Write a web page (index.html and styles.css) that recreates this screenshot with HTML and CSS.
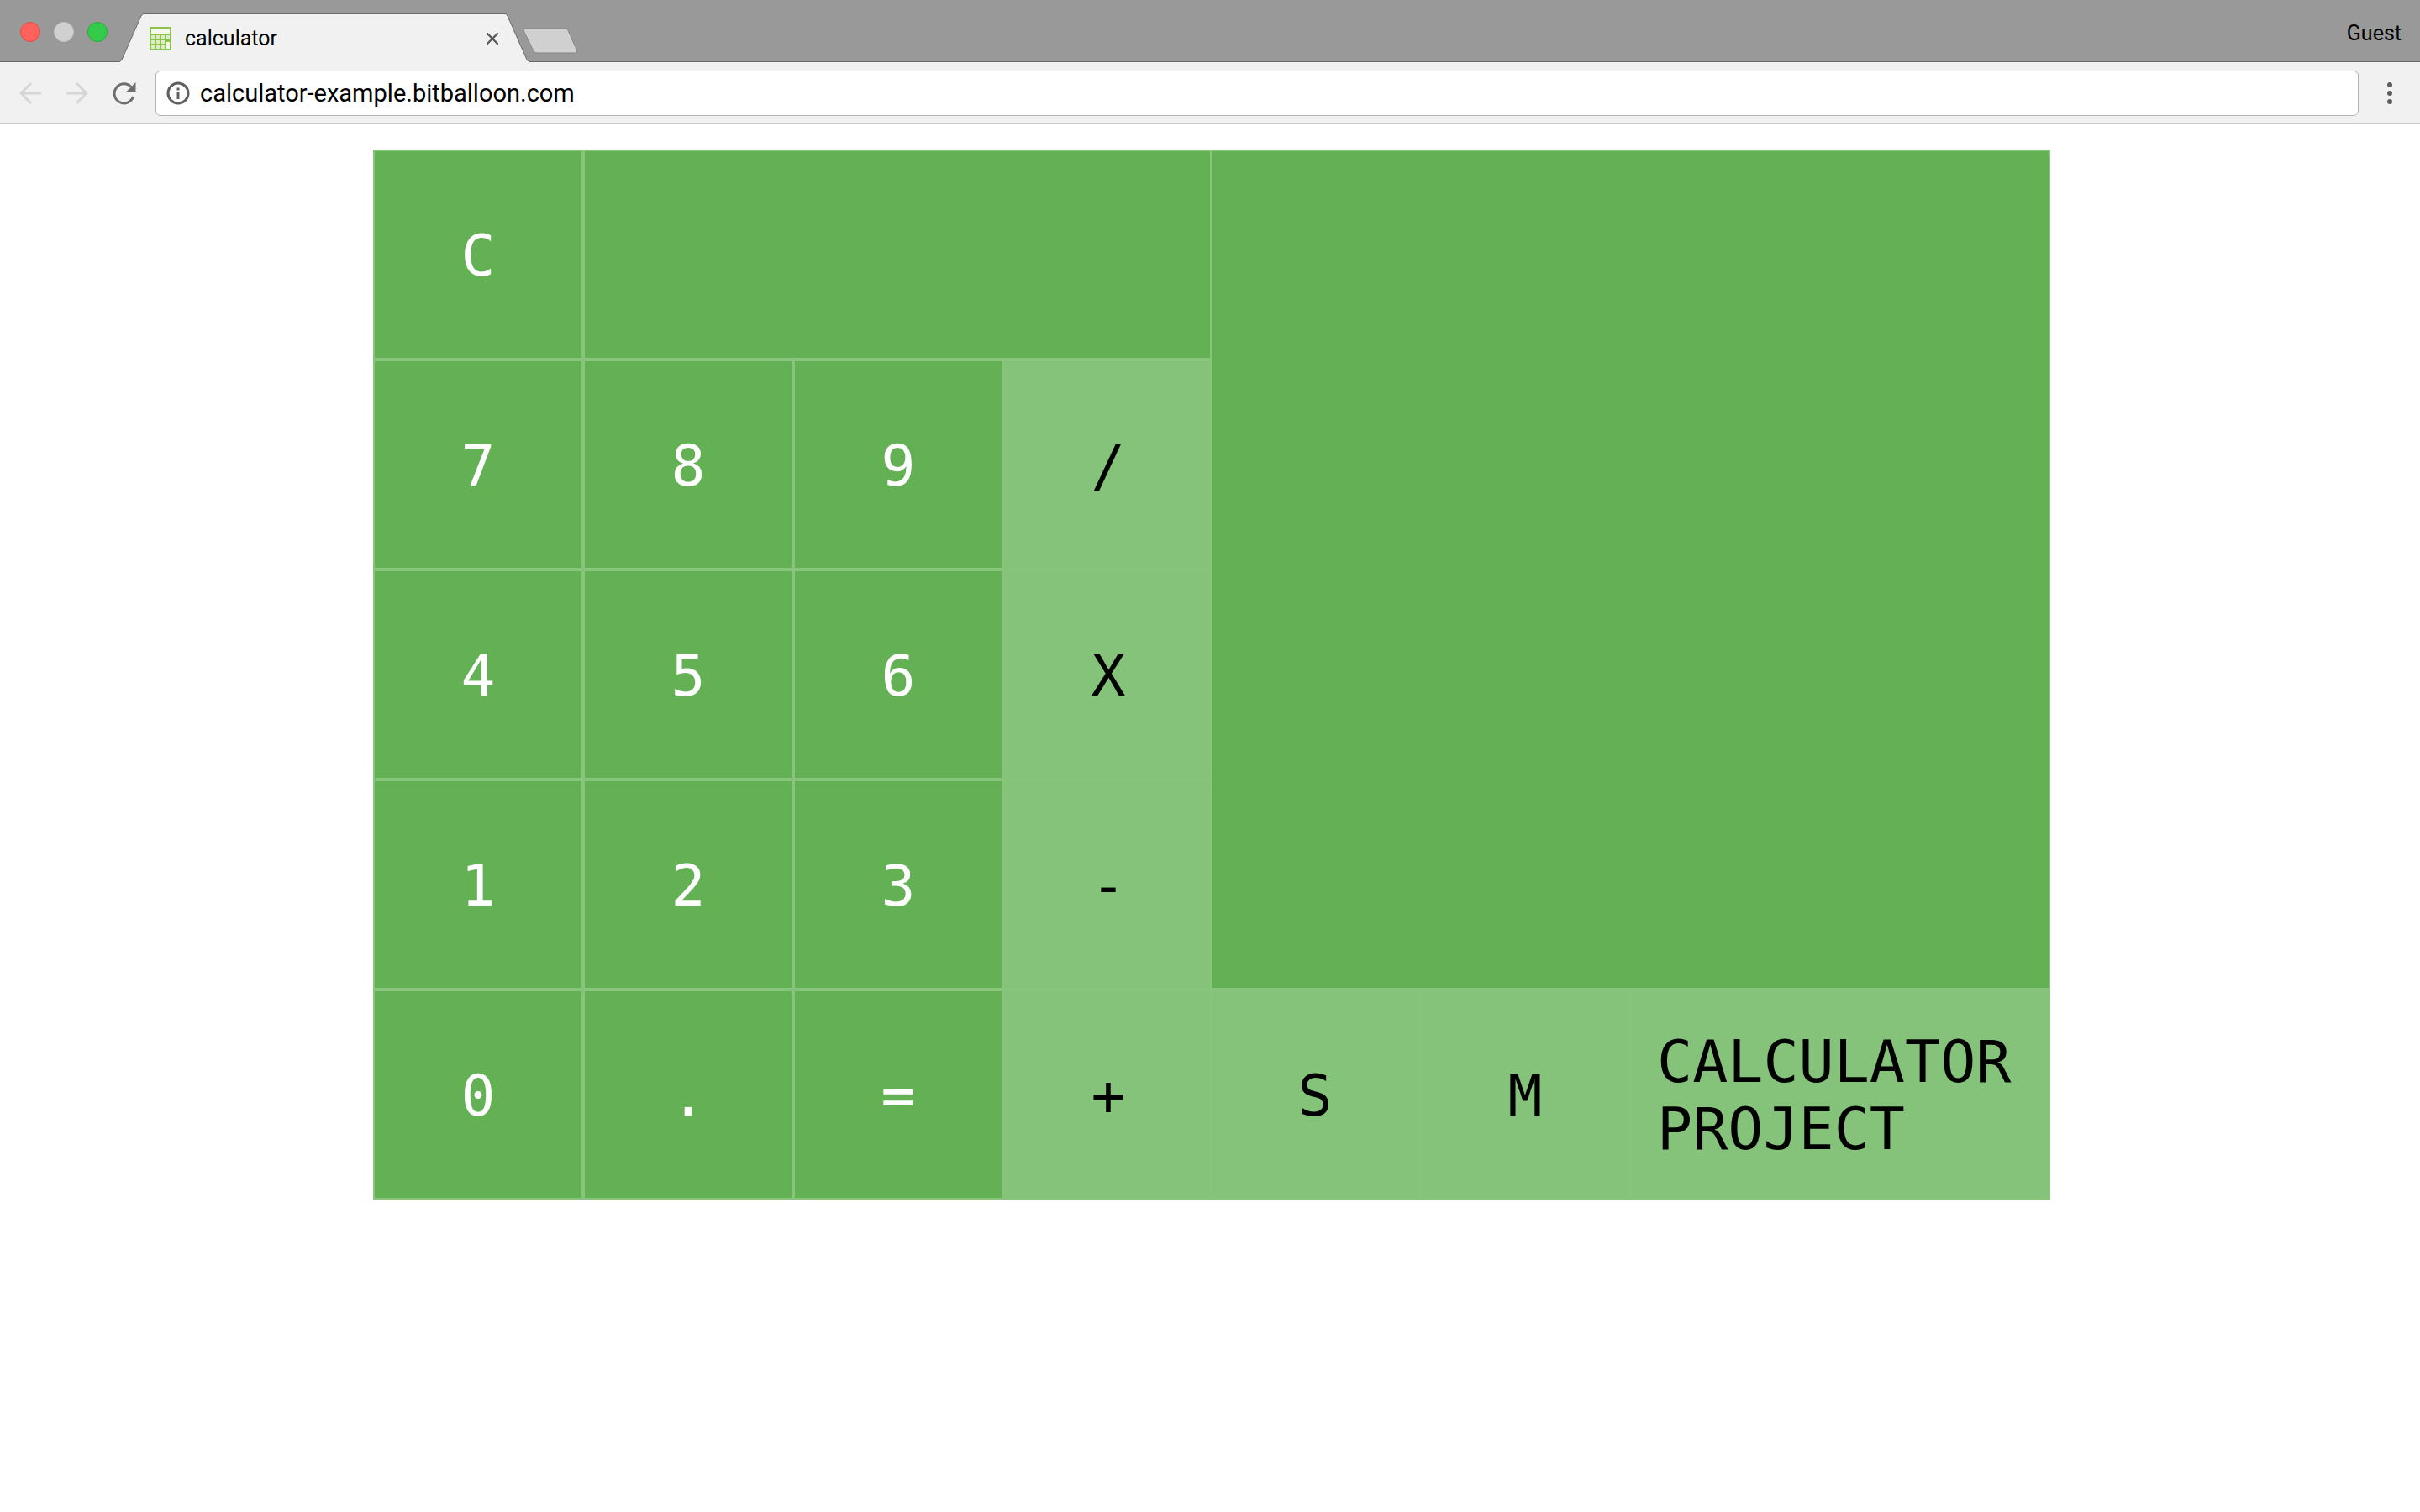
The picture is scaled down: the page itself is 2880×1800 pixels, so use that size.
FILE: index.html
```html
<!DOCTYPE html>
<html lang="en">
<head>
<meta charset="utf-8">
<title>calculator</title>
<link rel="stylesheet" href="styles.css">
</head>
<body>
<header class="browser">
  <div class="tab-strip">
    <div class="window-controls">
      <button class="light light-close" aria-label="Close window"></button>
      <button class="light light-min" aria-label="Minimize window"></button>
      <button class="light light-zoom" aria-label="Zoom window"></button>
    </div>
    <div class="tab">
      <svg class="tab-edge" width="28" height="58" viewBox="0 0 28 58" aria-hidden="true"><path d="M0 58V56.500Q1.500 56.500 2 55L25 3Q26 .5 28 .5V58Z" fill="#f1f1f1"/><path d="M0 56.500Q1.500 56.500 2 55L25 3Q26 .5 28 .5" fill="none" stroke="#6a6a6a"/></svg>
      <div class="tab-body">
        <svg class="favicon" width="26" height="28" viewBox="0 0 26 28" aria-hidden="true"><path fill="#8bc34a" d="M0 0h26v28H0z"/><path fill="#f4f8ee" d="M2 2h22v6H2zM20 18h4v8h-4z"/><path fill="#dcebc8" d="M2 10h4v4H2zm6 0h4v4H8zm6 0h4v4h-4zm6 0h4v4h-4zM2 16h4v4H2zm6 0h4v4H8zm6 0h4v4h-4zM2 22h4v4H2zm6 0h4v4H8zm6 0h4v4h-4z"/></svg>
        <span class="tab-title">calculator</span>
        <button class="icon-button" aria-label="Close tab"><svg width="14" height="14" viewBox="0 0 14 14"><path d="M1 1l12 12M13 1L1 13" stroke="#5a5a5a" stroke-width="2.400" stroke-linecap="round"/></svg></button>
      </div>
      <svg class="tab-edge" width="28" height="58" viewBox="0 0 28 58" aria-hidden="true"><path d="M28 58V56.500Q26.500 56.500 26 55L3 3Q2 .5 0 .5V58Z" fill="#f1f1f1"/><path d="M28 56.500Q26.500 56.500 26 55L3 3Q2 .5 0 .5" fill="none" stroke="#6a6a6a"/></svg>
    </div>
    <button class="icon-button new-tab" aria-label="New tab"><svg width="66" height="32" viewBox="0 0 66 32"><path d="M4 1H50Q53 1 54 3L64.500 27Q65.500 30 62.500 30H17Q14 30 12.500 27L1.500 4Q.5 1 4 1Z" fill="#d0d0d0" stroke="#858585"/></svg></button>
    <button class="guest">Guest</button>
  </div>
  <div class="toolbar">
    <button class="icon-button" aria-label="Back"><svg width="28" height="28" viewBox="0 0 28 28"><path d="M27 14H3M15 2L3 14L15 26" fill="none" stroke="#d6d6d6" stroke-width="3"/></svg></button>
    <button class="icon-button" aria-label="Forward"><svg width="28" height="28" viewBox="0 0 28 28"><path d="M1 14H25M13 2L25 14L13 26" fill="none" stroke="#d6d6d6" stroke-width="3"/></svg></button>
    <button class="icon-button" aria-label="Reload"><svg width="28" height="28" viewBox="0 0 28 28"><path d="M22 6.500A11.500 11.500 0 1 0 24.500 18" fill="none" stroke="#6e6e6e" stroke-width="3"/><path d="M27.500 1V12H16.500Z" fill="#6e6e6e"/></svg></button>
    <label class="omnibox">
      <svg width="28" height="28" viewBox="0 0 28 28" aria-hidden="true"><circle cx="14" cy="14" r="12" fill="none" stroke="#5f5f5f" stroke-width="3"/><path d="M12.500 7.500h3v3h-3zM12.500 12.500h3v8.500h-3z" fill="#5f5f5f"/></svg>
      <input class="address" type="text" aria-label="Address" value="calculator-example.bitballoon.com">
    </label>
    <button class="icon-button" aria-label="Menu"><svg width="28" height="28" viewBox="0 0 28 28" fill="#5f5f5f"><circle cx="14" cy="4" r="3"/><circle cx="14" cy="14" r="3"/><circle cx="14" cy="24" r="3"/></svg></button>
  </div>
</header>
<main class="calculator">
  <section class="keypad" aria-label="Keypad">
    <button class="key">C</button>
    <output class="display"></output>
    <button class="key">7</button><button class="key">8</button><button class="key">9</button><button class="key light-key">/</button>
    <button class="key">4</button><button class="key">5</button><button class="key">6</button><button class="key light-key">X</button>
    <button class="key">1</button><button class="key">2</button><button class="key">3</button><button class="key light-key">-</button>
    <button class="key">0</button><button class="key">.</button><button class="key">=</button><button class="key light-key">+</button>
  </section>
  <section class="side" aria-label="History">
    <output class="history"></output>
    <button class="key light-key">S</button>
    <button class="key light-key">M</button>
    <h1 class="title">CALCULATOR PROJECT</h1>
  </section>
</main>
</body>
</html>
```
FILE: styles.css
```css
* {
  box-sizing: border-box;
}

body {
  margin: 0;
  background: #fff;
  font-family: Roboto, "Liberation Sans", sans-serif;
  color: #000;
}

button {
  padding: 0;
  border: 0;
  background: none;
  color: inherit;
  font: inherit;
}

svg {
  display: block;
}

/* Browser window */
.browser {
  background: #f1f1f1;
  border-bottom: 1px solid #ccc;
}

.tab-strip {
  display: flex;
  align-items: flex-end;
  height: 74px;
  padding: 0 22px 0 24px;
  background: linear-gradient(#999, #999 73px, #6a6a6a 73px);
}

.window-controls {
  display: flex;
  gap: 16px;
  padding-bottom: 24px;
}

.light {
  width: 24px;
  height: 24px;
  border: 1px solid;
  border-radius: 50%;
}

.light-close {
  background: #ff625c;
  border-color: #e24b46;
}

.light-min {
  background: #d0d0d0;
  border-color: #c4c4c4;
}

.light-zoom {
  background: #34cb4b;
  border-color: #24ac37;
}

.tab {
  display: flex;
  margin-left: 15px;
}

.tab-edge {
  flex: none;
}

.tab-body {
  display: flex;
  align-items: center;
  width: 430px;
  height: 58px;
  padding: 0 8px 0 7px;
  background: #f1f1f1;
  border-top: 1px solid #6a6a6a;
}

.tab-title {
  flex: 1;
  padding-left: 16px;
  font-size: 25px;
}

.icon-button {
  flex: none;
}

.new-tab {
  margin: 0 auto 9px -7px;
}

.guest {
  font-size: 25px;
  padding-bottom: 20px;
}

.toolbar {
  display: flex;
  align-items: center;
  gap: 28px;
  height: 73px;
  padding: 0 22px;
}

.omnibox {
  display: flex;
  flex: 1;
  align-items: center;
  gap: 12px;
  height: 54px;
  margin: 0 -5px;
  padding: 0 12px;
  background: #fff;
  border: 1px solid #b4b4b4;
  border-radius: 6px;
}

.address {
  flex: 1;
  min-width: 0;
  padding: 0;
  border: 0;
  background: none;
  font: inherit;
  font-size: 29px;
  color: #000;
}

/* Calculator */
.calculator {
  display: flex;
  max-width: 2000px;
  margin: 30px auto;
  padding-left: 4px;
  font-family: "DejaVu Sans Mono", monospace;
}

.keypad,
.side {
  display: grid;
  flex: 1;
  grid-template-columns: repeat(4, 1fr);
  grid-auto-rows: 250px;
}

.side {
  margin-left: -4px;
  grid-template-rows: 1000px;
}

.key,
.display,
.history,
.title {
  border: 2px solid #88c57c;
  background: #64b055;
}

.key {
  padding-top: 2px;
  color: #fff;
  font-size: 68px;
}

.light-key,
.title {
  background: #84c379;
  color: #000;
}

.display {
  grid-column: span 3;
}

.history {
  grid-column: span 4;
}

.title {
  display: flex;
  align-items: center;
  grid-column: span 2;
  margin: 0;
  padding: 2px 30px 0;
  font-size: 70px;
  font-weight: 400;
  line-height: 80px;
}
```
